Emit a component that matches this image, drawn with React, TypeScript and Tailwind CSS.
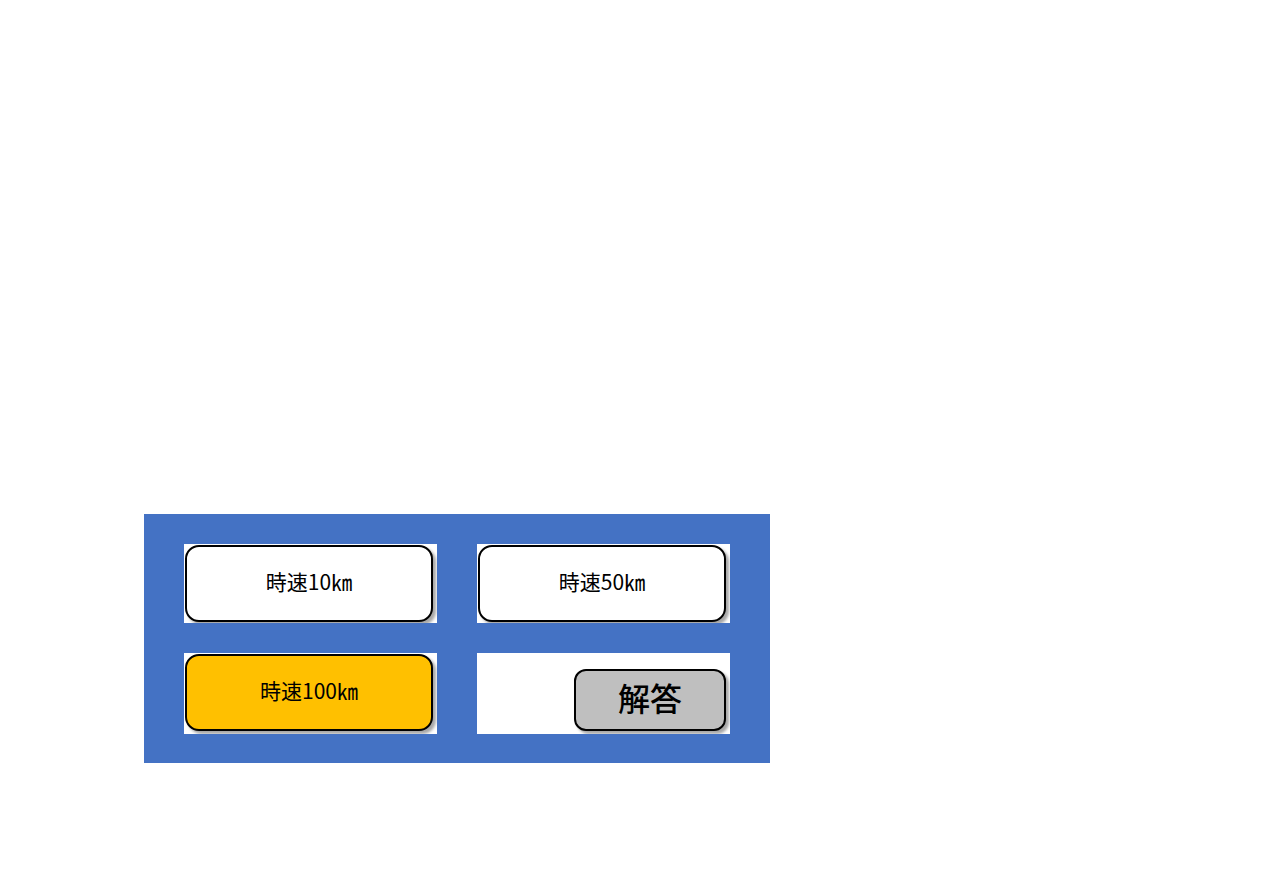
const choices = [
  { label: "時速10㎞", selected: false },
  { label: "時速50㎞", selected: false },
  { label: "時速100㎞", selected: true },
];

const base =
  "cursor-pointer border-2 border-black pb-1.5 text-black shadow-[3px_3px_3px_rgba(0,0,0,0.35)]";

export default function App() {
  return (
    <main className="min-h-screen bg-white px-36 pt-[514px] font-['Noto_Sans_CJK_JP',sans-serif]">
      <section className="grid w-full max-w-[626px] grid-cols-2 grid-rows-[79px_81px] gap-x-10 gap-y-[30px] bg-[#4472c4] px-10 pt-[30px] pb-[29px]">
        {choices.map((choice) => (
          <div
            key={choice.label}
            className="flex items-start overflow-hidden bg-white pt-px pr-1 pl-px"
          >
            <button
              type="button"
              aria-pressed={choice.selected}
              className={`${base} h-[77px] w-full rounded-[14px] text-[21px] leading-6 ${
                choice.selected ? "bg-[#ffc000]" : "bg-white"
              }`}
            >
              {choice.label}
            </button>
          </div>
        ))}
        <div className="flex items-end justify-end overflow-hidden bg-white pr-1 pb-[3px]">
          <button
            type="button"
            className={`${base} h-[62px] w-[152px] rounded-[12px] bg-[#bfbfbf] text-[32px] font-medium leading-9`}
          >
            解答
          </button>
        </div>
      </section>
    </main>
  );
}
